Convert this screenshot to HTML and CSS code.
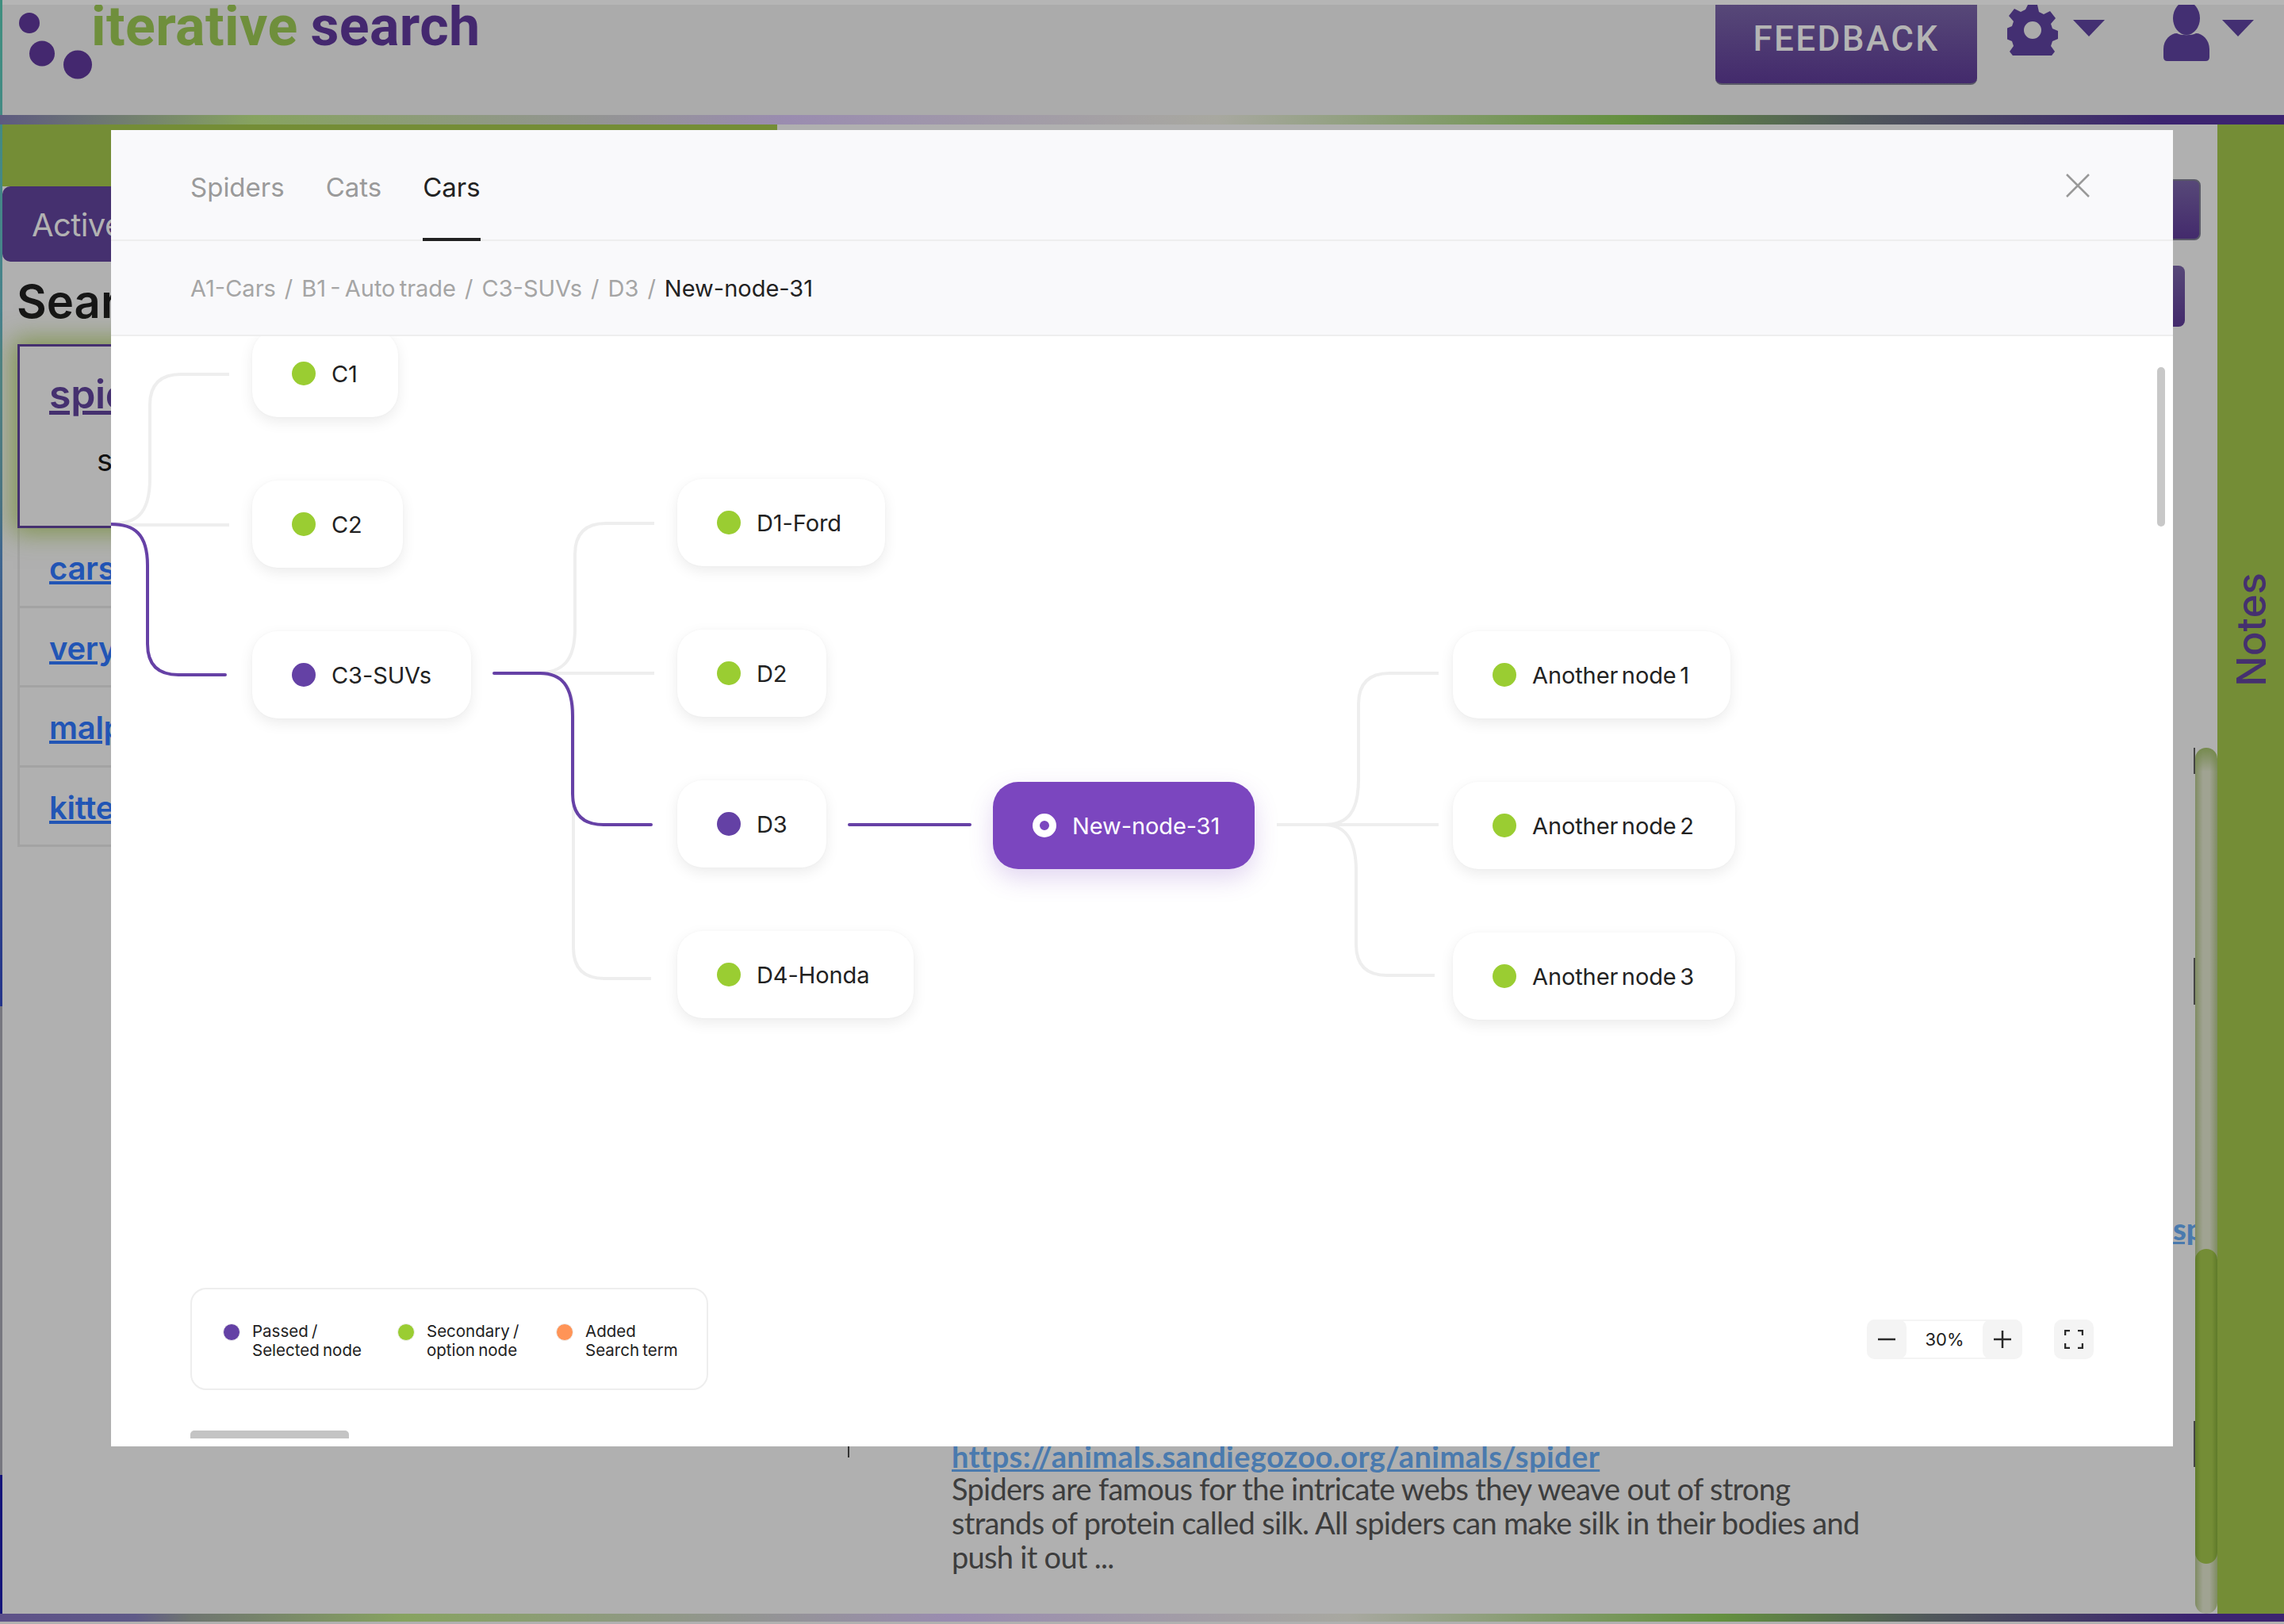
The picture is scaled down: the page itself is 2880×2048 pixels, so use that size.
FILE: index.html
```html
<!DOCTYPE html>
<html lang="en">
<head>
<meta charset="utf-8">
<title>iterative search</title>
<link rel="stylesheet" href="styles.css">
</head>
<body>
<div class="app">
  <header class="topbar">
    <div class="logo">
      <svg class="logo-dots" viewBox="0 0 120 110" width="120" height="110" aria-hidden="true">
        <ellipse cx="37" cy="29" rx="13" ry="13"/>
        <ellipse cx="53" cy="67.5" rx="16" ry="16"/>
        <ellipse cx="98" cy="81.5" rx="18" ry="18"/>
      </svg>
      <span class="logo-text"><span class="logo-green">iterative</span> <span class="logo-purple">search</span></span>
    </div>
    <div class="top-actions">
      <button class="feedback">FEEDBACK</button>
      <svg class="gear" viewBox="0 0 64 64" width="64" height="64" aria-hidden="true">
        <path fill-rule="evenodd" d="M26 0h12l2 9 6 3 8-4 7 9-6 7 2 6 7 3v10l-7 3-2 6 5 7-7 9-8-4-6 3-2 9H26l-2-9-6-3-8 4-7-9 5-7-2-6-7-3V30l7-3 2-6-6-7 7-9 8 4 6-3zM32 21a11 11 0 1 0 0 22 11 11 0 0 0 0-22z"/>
      </svg>
      <span class="caret"></span>
      <svg class="user" viewBox="0 0 58 71" width="58" height="71" aria-hidden="true">
        <ellipse cx="29" cy="17" rx="17" ry="21"/>
        <path d="M0 66V56C0 44 9 36 17 36 22 39 36 39 41 36 49 36 58 44 58 56V66Q58 71 53 71H5Q0 71 0 66z"/>
      </svg>
      <span class="caret"></span>
    </div>
  </header>
  <div class="rainbow"></div>
  <main class="main">
    <section class="left">
      <div class="green-band"></div>
      <div class="active-tab">Active</div>
      <h2 class="left-title">Search</h2>
      <div class="terms">
        <div class="term term-current">
          <a class="term-main">spiders</a>
          <p class="term-sub">s</p>
        </div>
        <div class="term"><a>cars</a></div>
        <div class="term"><a>very large</a></div>
        <div class="term"><a>malpractice</a></div>
        <div class="term"><a>kittens</a></div>
      </div>
    </section>
    <section class="results">
      <div class="res-btn res-btn-a"></div>
      <div class="res-btn res-btn-b"></div>
      <a class="clip-link">spiders</a>
      <div class="tick-mark"></div>
      <article class="result">
        <a class="result-link">https://animals.sandiegozoo.org/animals/spider</a>
        <p class="result-text">Spiders are famous for the intricate webs they weave out of strong<br>strands of protein called silk. All spiders can make silk in their bodies and<br>push it out ...</p>
      </article>
      <div class="track"><div class="thumb"></div></div>
      <i class="edge edge-a"></i>
      <i class="edge edge-b"></i>
      <i class="edge edge-c"></i>
    </section>
    <aside class="notes"><span class="notes-label">Notes</span></aside>
  </main>
  <div class="rainbow rainbow-bottom"></div>
</div>

<div class="modal">
  <nav class="tabs">
    <a class="tab">Spiders</a>
    <a class="tab">Cats</a>
    <a class="tab tab-active">Cars</a>
    <svg class="close" viewBox="0 0 30 30" width="30" height="30" aria-hidden="true"><path d="M1 1l28 28M29 1L1 29"/></svg>
  </nav>
  <div class="crumbs">
    <span>A1-Cars</span><i>/</i><span>B1 - Auto trade</span><i>/</i><span>C3-SUVs</span><i>/</i><span>D3</span><i>/</i><b>New-node-31</b>
  </div>
  <div class="canvas">
    <svg class="wires" viewBox="0 1 2600 1400" width="2600" height="1400" aria-hidden="true">
      <g class="wire">
        <path d="M-4 238C30 238 49 228 49 180V88Q49 49 88 49H149"/>
        <path d="M-4 239H149"/>
        <path d="M535 426C570 426 585 410 585 370V276Q585 237 624 237H685"/>
        <path d="M535 426H685"/>
        <path d="M535 426C570 426 583 440 583 480V772Q583 811 622 811H681"/>
        <path d="M1470 617H1674"/>
        <path d="M1530 617C1560 617 1573 600 1573 560V465Q1573 426 1612 426H1674"/>
        <path d="M1530 617C1555 617 1570 635 1570 675V768Q1570 807 1609 807H1669"/>
      </g>
      <g class="wire wire-on">
        <path d="M0 238C29 238 46 250 46 290V389Q46 428 85 428H144"/>
        <path d="M483 426H541C568 426 582 442 582 480V578Q582 617 621 617H681"/>
        <path d="M931 617H1083"/>
      </g>
    </svg>

    <div class="node node-c1"><i class="dot"></i>C1</div>
    <div class="node node-c2"><i class="dot"></i>C2</div>
    <div class="node node-c3"><i class="dot dot-on"></i>C3-SUVs</div>
    <div class="node node-d1"><i class="dot"></i>D1-Ford</div>
    <div class="node node-d2"><i class="dot"></i>D2</div>
    <div class="node node-d3"><i class="dot dot-on"></i>D3</div>
    <div class="node node-d4"><i class="dot"></i>D4-Honda</div>
    <div class="node node-current"><i class="dot dot-current"></i>New-node-31</div>
    <div class="node node-a1"><i class="dot"></i>Another node 1</div>
    <div class="node node-a2"><i class="dot"></i>Another node 2</div>
    <div class="node node-a3"><i class="dot"></i>Another node 3</div>

    <div class="vbar"></div>
    <div class="hbar"></div>

    <div class="legend">
      <div class="legend-item legend-a"><i class="ldot ldot-purple"></i><span>Passed /<br>Selected node</span></div>
      <div class="legend-item legend-b"><i class="ldot ldot-green"></i><span>Secondary /<br>option node</span></div>
      <div class="legend-item"><i class="ldot ldot-orange"></i><span>Added<br>Search term</span></div>
    </div>

    <div class="zoomer">
      <div class="zoom-group">
        <button class="zoom-btn"><svg viewBox="0 0 24 24" width="24" height="24" aria-hidden="true"><path d="M1 12h22"/></svg></button>
        <span class="zoom-val">30%</span>
        <button class="zoom-btn"><svg viewBox="0 0 24 24" width="24" height="24" aria-hidden="true"><path d="M1 12h22M12 1v22"/></svg></button>
      </div>
      <button class="zoom-btn zoom-full"><svg viewBox="0 0 24 24" width="24" height="24" aria-hidden="true"><path d="M1 7V1h6M17 1h6v6M23 17v6h-6M7 23H1v-6"/></svg></button>
    </div>
  </div>
</div>
</body>
</html>
```
FILE: styles.css
```css
* { box-sizing: border-box; }
html, body { margin: 0; padding: 0; }
body {
  width: 2880px;
  height: 2048px;
  overflow: hidden;
  position: relative;
  background: #b0b0b0;
  font-family: "Inter", "Liberation Sans", sans-serif;
}
button { font: inherit; border: 0; padding: 0; }
p, h2 { margin: 0; }

.app {
  height: 2048px;
  padding-left: 3px;
  display: flex;
  flex-direction: column;
  background: linear-gradient(to bottom, #3f8f7f 0, #4a7f8f 500px, #3a5a90 800px, #25358a 1269px, #77777f 1269px, #77777f 1860px, #14147a 1860px, #14147a 100%);
}

/* header */
.topbar {
  height: 145px;
  flex: none;
  border-top: 6px solid #b5b5b5;
  background: #ababab;
  overflow: hidden;
  display: flex;
  justify-content: space-between;
}
.logo { position: relative; padding: 0 0 0 112px; }
.logo-dots { position: absolute; left: -3px; top: -6px; fill: #44286f; }
.logo-text {
  font-family: "Roboto", sans-serif;
  font-weight: 700;
  font-size: 70px;
  letter-spacing: .4px;
  line-height: 1;
  display: block;
  margin-top: -8px;
  white-space: nowrap;
  word-spacing: -2px;
}
.logo-green { color: #6f8f3c; }
.logo-purple { color: #44286f; }
.top-actions { display: flex; align-items: flex-start; padding-right: 38px; }
.feedback {
  width: 330px;
  height: 101px;
  border-radius: 0 0 8px 8px;
  background: linear-gradient(to bottom, #574878, #432a6c);
  border-bottom: 2px solid #5a5a68;
  color: #b4b4b4;
  font-family: "Roboto", sans-serif;
  font-weight: 500;
  font-size: 44px;
  letter-spacing: 2.4px;
  margin-right: 38px;
  padding-bottom: 14px;
}
.gear { fill: #432f72; flex: none; }
.caret {
  width: 0; height: 0;
  border-left: 20px solid transparent;
  border-right: 20px solid transparent;
  border-top: 21px solid #432f72;
  margin: 19px 0 0 19px;
  flex: none;
}
.user { fill: #432f72; margin: 0 0 0 74px; flex: none; }
.user + .caret { margin-left: 16px; }

.rainbow {
  height: 12px;
  flex: none;
  margin-left: -3px;
  background: linear-gradient(to right, #5d5a80 0, #87a360 320px, #9a8cb0 992px, #a8a8a0 1534px, #64903f 2048px, #50585a 2340px, #3c2470 2720px, #3c2470 100%);
}
.rainbow-bottom {
  height: 13px;
  border-bottom: 3px solid #b0b0b0;
  background: linear-gradient(to right, #5e5188 0, #5f5a88 170px, #6f7570 240px, #87a360 510px, #9a8cb0 1200px, #a8a8a0 1700px, #64903f 2170px, #50585a 2430px, #3c2470 2760px, #3c2470 100%) border-box;
}

/* main */
.main { flex: 1; min-height: 0; display: flex; background: #b0b0b0; }

.left { width: 977px; flex: none; }
.green-band { height: 78px; background: #748d36; }
.active-tab {
  width: 400px;
  height: 95px;
  background: #45306f;
  border-radius: 10px;
  color: #b2b2b2;
  font-size: 40px;
  letter-spacing: -.6px;
  line-height: 97px;
  padding-left: 37px;
}
.left-title {
  font-size: 58px;
  font-weight: 600;
  color: #161616;
  line-height: 70px;
  margin: 15px 0 19px 18px;
}
.terms { margin-left: 19px; width: 700px; }
.term {
  height: 100.5px;
  border: 3px solid #a3a3a3;
  border-top: 0;
  padding: 21px 0 0 37px;
  font-size: 40px;
  letter-spacing: -.3px;
  font-weight: 600;
  line-height: 60px;
}
.term a { color: #2255b5; text-decoration: underline; }
.term-current {
  height: 232px;
  border: 3px solid #45306f;
  box-shadow: 0 0 30px 6px rgba(116, 141, 54, .8);
  background: #b0b0b0;
  position: relative;
  padding-top: 25px;
}
.term-current .term-main { font-size: 50px; line-height: 70px; color: #45306f; font-weight: 600; }
.term-sub { font-size: 38px; font-weight: 400; color: #111; margin: 23px 0 0 60px; line-height: 50px; }

.results {
  flex: 1;
  min-width: 0;
  position: relative;
  display: flex;
  flex-direction: column;
  align-items: flex-end;
  overflow: hidden;
  padding-top: 69px;
}
.res-btn {
  height: 77px;
  width: 300px;
  background: linear-gradient(to bottom, #574878, #432a6c);
  border-radius: 8px;
  flex: none;
}
.res-btn-a { margin-right: 21px; border: 2px solid #5a5a68; }
.res-btn-b { margin: 32px 41px 0 0; }
.clip-link {
  align-self: flex-start;
  margin: 1114px 0 0 1760px;
  font-family: "Lato", sans-serif;
  font-size: 38px;
  font-weight: 900;
  color: #4a7aae;
  text-decoration: underline;
  line-height: 46px;
  white-space: nowrap;
}
.tick-mark { align-self: flex-start; width: 2px; height: 14px; margin: 252px 0 0 89px; background: #333; flex: none; }
.result { align-self: flex-start; margin: -21px 0 0 220px; }
.result-link {
  font-family: "Lato", sans-serif;
  font-size: 38px;
  font-weight: 700;
  letter-spacing: .4px;
  color: #4a7aae;
  text-decoration: underline;
  line-height: 39px;
  display: block;
}
.result-text {
  font-family: "Lato", sans-serif;
  font-size: 38px;
  letter-spacing: -.72px;
  color: #3d3d3d;
  line-height: 43px;
}

.track {
  position: absolute;
  right: 0;
  top: 786px;
  bottom: 0;
  width: 28px;
  border-radius: 14px;
  background:
    linear-gradient(to bottom, rgba(113, 135, 70, .9), rgba(113, 135, 70, 0) 30px),
    linear-gradient(to right, #7f8c62, #a0a392 35%, #a0a392 65%, #7f8c62);
}
.thumb {
  margin-top: 632px;
  height: 397px;
  border-radius: 14px;
  background: linear-gradient(to right, #5f7a2a, #748d36 25%, #748d36 75%, #5f7a2a);
}
.edge { position: absolute; right: 28px; width: 2px; background: #444; }
.edge-a { top: 786px; height: 33px; }
.edge-b { top: 1051px; height: 59px; }
.edge-c { top: 1635px; height: 58px; }

.notes {
  width: 84px;
  flex: none;
  background: #748d36;
  position: relative;
}
.notes-label {
  position: absolute;
  left: 50%;
  top: 637px;
  transform: translate(-50%, -50%) rotate(-90deg);
  color: #45306f;
  font-size: 51px;
  font-weight: 500;
  line-height: 1;
}

/* modal */
.modal {
  position: absolute;
  left: 140px;
  top: 164px;
  width: 2600px;
  height: 1660px;
  background: #fff;
  display: flex;
  flex-direction: column;
  overflow: hidden;
  font-family: "Inter", sans-serif;
}
.tabs {
  height: 140px;
  flex: none;
  display: flex;
  align-items: flex-start;
  gap: 52px;
  padding-left: 100px;
  background: #f9f9fb;
  border-bottom: 2px solid #eeeeee;
  position: relative;
}
.tab {
  font-size: 33px;
  color: #9a9a9a;
  line-height: 136px;
  height: 140px;
  padding-top: 4px;
}
.tab-active { color: #222; border-bottom: 4px solid #222; }
.close {
  position: absolute;
  right: 105px;
  top: 55px;
  fill: none;
  stroke: #999;
  stroke-width: 2.5;
}
.crumbs {
  height: 120px;
  flex: none;
  display: flex;
  align-items: center;
  gap: 11px;
  padding: 1px 0 0 100px;
  background: #f9f9fb;
  border-bottom: 2px solid #eeeeee;
  font-size: 29px;
  word-spacing: -3px;
  color: #a5a5a5;
}
.crumbs i { font-style: normal; }
.crumbs b { font-weight: 400; color: #222; }

.canvas { flex: 1; position: relative; overflow: hidden; background: #fff; }
.wires { position: absolute; left: 0; top: 0; fill: none; overflow: visible; }
.wire path { stroke: #eeeeee; stroke-width: 4; }
.wire-on path { stroke: #6641a6; stroke-width: 4; stroke-linecap: round; }

.node {
  position: absolute;
  height: 110px;
  border-radius: 32px;
  background: #fff;
  box-shadow: 0 6px 18px rgba(0, 0, 0, .08), 0 0 3px rgba(0, 0, 0, .03);
  display: flex;
  align-items: center;
  padding-left: 50px;
  font-size: 29px;
  word-spacing: -3.5px;
  letter-spacing: -.1px;
  color: #222;
  white-space: nowrap;
}
.dot { width: 30px; height: 30px; border-radius: 50%; background: #9acd32; margin-right: 20px; flex: none; }
.dot-on { background: #6441a5; }
.dot-current { background: #7b46bf; border: 9px solid #fff; }
.node-c1 { left: 178px; top: -8px; width: 184px; }
.node-c2 { left: 178px; top: 182px; width: 190px; }
.node-c3 { left: 178px; top: 372px; width: 276px; }
.node-d1 { left: 714px; top: 180px; width: 262px; }
.node-d2 { left: 714px; top: 370px; width: 188px; }
.node-d3 { left: 714px; top: 560px; width: 188px; }
.node-d4 { left: 714px; top: 750px; width: 298px; }
.node-current {
  left: 1112px; top: 562px; width: 330px;
  background: #7b46bf;
  color: #fff;
  box-shadow: 0 12px 30px rgba(123, 70, 191, .22);
}
.node-a1 { left: 1692px; top: 372px; width: 350px; }
.node-a2 { left: 1692px; top: 562px; width: 356px; }
.node-a3 { left: 1692px; top: 752px; width: 356px; }

.vbar { position: absolute; left: 2580px; top: 39px; width: 10px; height: 201px; border-radius: 5px; background: #c8c8c8; }
.hbar { position: absolute; left: 100px; top: 1380px; width: 200px; height: 10px; border-radius: 5px 5px 0 0; background: #c4c4c4; }

.legend {
  position: absolute;
  left: 100px;
  top: 1200px;
  width: 653px;
  height: 129px;
  border: 2px solid #eeeeee;
  border-radius: 20px;
  display: flex;
  padding: 41px 0 0 39px;
  font-size: 20.5px;
  word-spacing: -1.5px;
  line-height: 24px;
  color: #222;
}
.legend-item { display: flex; }
.legend-a { width: 220px; }
.legend-b { width: 200px; }
.ldot {
  width: 22px; height: 22px;
  border-radius: 50%;
  border: 1px solid #eee;
  margin: 2px 15px 0 0;
  flex: none;
}
.ldot-purple { background: #6441a5; }
.ldot-green { background: #9acd32; }
.ldot-orange { background: #ff9457; }

.zoomer {
  position: absolute;
  left: 2214px;
  top: 1240px;
  display: flex;
  gap: 40px;
}
.zoom-group {
  width: 196px;
  height: 50px;
  display: flex;
  border-radius: 10px;
  border: solid #f4f4f4;
  border-width: 2px 0;
}
.zoom-group .zoom-btn { margin: -2px 0; }
.zoom-btn {
  width: 50px;
  height: 50px;
  flex: none;
  border-radius: 10px;
  background: #f4f4f4;
  display: flex;
  align-items: center;
  justify-content: center;
}
.zoom-btn svg { fill: none; stroke: #2a2a2a; stroke-width: 2.5; }
.zoom-val { flex: 1; text-align: center; font-size: 22px; line-height: 46px; color: #222; }
```
